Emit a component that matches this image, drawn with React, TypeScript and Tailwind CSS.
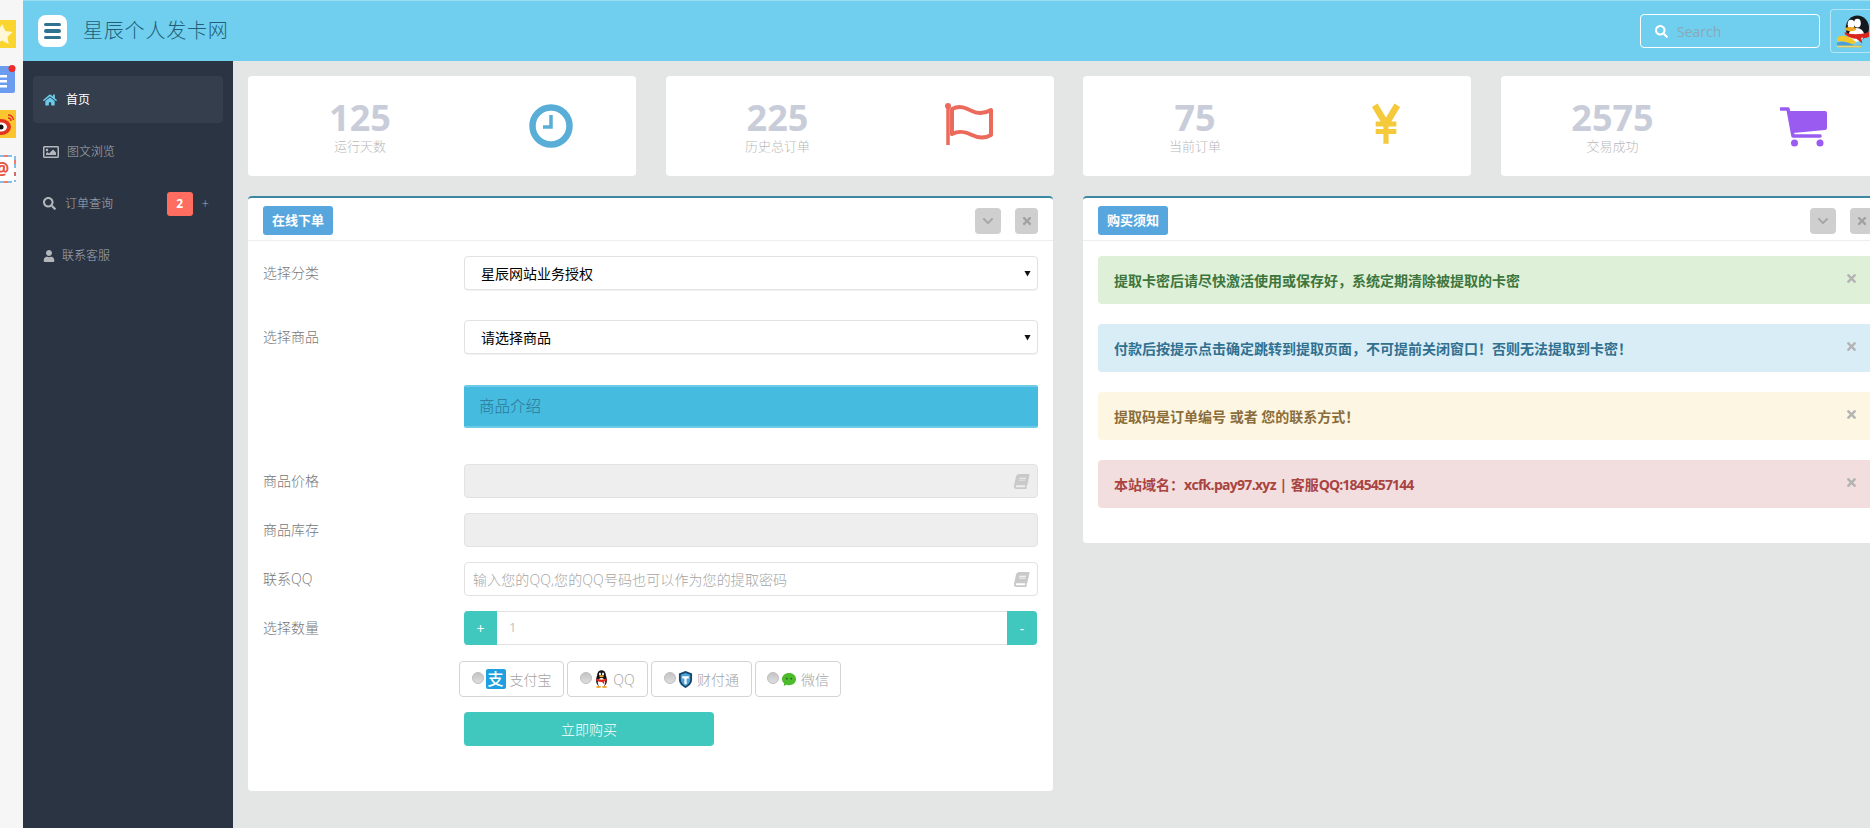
import React from 'react';
import { FaHome, FaRegImage, FaSearch, FaUser, FaBook, FaChevronDown, FaTimes } from 'react-icons/fa';

function Penguin({ className }: { className?: string }) {
  return (
    <svg viewBox="0 0 30 36" className={className}>
      <ellipse cx="15" cy="20" rx="11" ry="14" fill="#111" />
      <ellipse cx="15" cy="9" rx="8.5" ry="8.5" fill="#111" />
      <ellipse cx="15" cy="25" rx="7.5" ry="9" fill="#fff" />
      <ellipse cx="12" cy="8" rx="2" ry="3" fill="#fff" />
      <ellipse cx="18" cy="8" rx="2" ry="3" fill="#fff" />
      <ellipse cx="15" cy="12.5" rx="4.5" ry="2" fill="#f5a623" />
      <path d="M5 17c6 3 14 3 20 0l1 4c-2 1-4 1.500-6 2l1 6-5-5c-4 0-8-1-12-3z" fill="#e0251b" />
      <ellipse cx="9" cy="34" rx="5" ry="2" fill="#f5a623" />
      <ellipse cx="21" cy="34" rx="5" ry="2" fill="#f5a623" />
    </svg>
  );
}

function Avatar() {
  return (
    <svg viewBox="0 0 34 34" className="w-[34px] h-[34px]">
      <ellipse cx="21" cy="14" rx="12" ry="13" fill="#14181f" />
      <ellipse cx="20" cy="21" rx="8" ry="7" fill="#fff" />
      <ellipse cx="14.500" cy="10" rx="3.500" ry="4.500" fill="#fff" />
      <ellipse cx="21" cy="9" rx="3.500" ry="4.500" fill="#fff" />
      <ellipse cx="14" cy="15" rx="6" ry="2.200" fill="#f2a81d" />
      <path d="M8 18c6 3 16 3 25 0v5c-3 2-6 1-8 1l1 6-6-5c-4 0-9-2-12-5z" fill="#d8261c" />
      <path d="M0 24c6-4 14-2 20 5l-6 2C9 28 4 27 0 28z" fill="#f3c62c" />
      <path d="M0 29c7-2 12 0 18 3l7-1v3H0z" fill="#4a9fd8" />
      <path d="M0 32h25v2H0z" fill="#f0d766" />
    </svg>
  );
}

function StatCard({ value, label, icon }: { value: string; label: string; icon: React.ReactNode }) {
  return (
    <div className="w-[388px] h-[100px] shrink-0 bg-white rounded flex items-center">
      <div className="w-[224px] flex flex-col items-center pt-[1px]">
        <div className="text-[36px] leading-[36px] font-bold text-[#c9cdd9]">{value}</div>
        <div className="text-[13px] leading-[16px] font-light text-[#b9b9b9] mt-[2px]">{label}</div>
      </div>
      <div className="w-[158px] flex justify-center">{icon}</div>
    </div>
  );
}

function Panel({ title, children }: { title: string; children: React.ReactNode }) {
  return (
    <div className="w-[805px] shrink-0 bg-white rounded border-t-2 border-[#3d87a3]">
      <div className="h-[43px] border-b border-[#eeeeee] pl-[15px] pr-[15px] flex items-start">
        <div className="mt-[8px] w-[70px] h-[29px] rounded-[3px] bg-[#57a7de] text-white text-[13px] font-bold flex items-center justify-center">
          {title}
        </div>
        <div className="ml-auto mt-[10px] flex gap-[14px]">
          <div className="w-[26px] h-[26px] rounded bg-[#cfcfcf] flex items-center justify-center text-[#a6a6a6]">
            <FaChevronDown className="text-[12px]" />
          </div>
          <div className="w-[23px] h-[26px] rounded bg-[#cfcfcf] flex items-center justify-center text-[#a0a0a0]">
            <FaTimes className="text-[12px]" />
          </div>
        </div>
      </div>
      {children}
    </div>
  );
}

function Row({ label, children, className }: { label?: string; children: React.ReactNode; className?: string }) {
  return (
    <div className={`flex ${className ?? ''}`}>
      <div className="w-[201px] shrink-0 text-[14px] font-light text-[#777777] h-[34px] pb-[2px] flex items-center">{label}</div>
      <div className="w-[574px]">{children}</div>
    </div>
  );
}

function FakeSelect({ text }: { text: string }) {
  return (
    <div className="h-[34px] rounded border border-[#e2e2e2] shadow-[0_1px_1px_rgba(0,0,0,0.05)] bg-white flex items-center pl-[16px] pr-[6px] text-[14px] text-black">
      <span>{text}</span>
      <svg viewBox="0 0 8 8" className="ml-auto w-[7px] h-[7px]"><path d="M0.500 1h7L4 7.500z" fill="#111" /></svg>
    </div>
  );
}

function BookIcon() {
  return <FaBook className="ml-auto text-[15px] text-[#c9c9c9] -skew-x-12" />;
}

function PayOption({ width, icon, label, nudge }: { width: string; icon: React.ReactNode; label: string; nudge?: string }) {
  return (
    <div className={`${width} h-[36px] rounded border border-[#d4d4d4] flex items-center justify-center text-[14px] font-light text-[#a3a3a3] gap-[2px] ${nudge ?? ''}`}>
      <span className="w-[12px] h-[12px] rounded-full bg-gradient-to-b from-[#c4c4c4] to-[#dedede] border border-[#bdbdbd] mb-[3px] shrink-0" />
      {icon}
      <span className="ml-[2px]">{label}</span>
    </div>
  );
}

function Alert({ bg, color, children }: { bg: string; color: string; children: React.ReactNode }) {
  return (
    <div className={`h-[48px] rounded mb-[20px] ${bg} ${color} pl-[16px] pr-[15px] flex items-center text-[14px] font-bold`}>
      <span>{children}</span>
      <FaTimes className="ml-auto mb-[3px] text-[13px] text-[#b3b3b3]" />
    </div>
  );
}

function NavItem({ icon, label, active, extra, gap }: { icon: React.ReactNode; label: string; active?: boolean; extra?: React.ReactNode; gap: string }) {
  return (
    <div className={`h-[47px] rounded flex items-center pl-[10px] pr-[14px] text-[12px] mb-[5px] ${gap} ${active ? 'bg-[#343e4d] text-white' : 'text-[#a9aeb5] font-light'}`}>
      {icon}
      <span>{label}</span>
      {extra}
    </div>
  );
}

export default function App() {
  return (
    <div className="w-[1870px] h-[828px] overflow-hidden flex bg-[#e4e6e6] font-['Open_Sans','Noto_Sans_CJK_SC',sans-serif]">
      <div className="w-[23px] shrink-0 bg-[#f6f6f6] flex flex-col pt-[20px] gap-[17px]">
        <svg viewBox="0 0 16 28" className="w-[16px] h-[28px]">
          <rect width="16" height="28" fill="#fbd52f" />
          <path d="M2 4l3.500 7 7 1-5 5 1.200 7-6.700-3.500L-5 24l1.200-7-5-5 7-1z" fill="#fff7d6" />
        </svg>
        <svg viewBox="0 0 16 28" className="w-[16px] h-[28px]">
          <rect x="-6" y="1" width="21" height="27" rx="2" fill="#6b9cf0" />
          <path d="M0 10h7v2.500H0zM0 15h7v2.500H0zM0 20h7v2.500H0z" fill="#fff" />
          <circle cx="12" cy="3.500" r="3.500" fill="#ee2a2a" />
        </svg>
        <svg viewBox="0 0 16 28" className="w-[16px] h-[28px]">
          <rect width="16" height="28" fill="#fbc52f" />
          <ellipse cx="1" cy="17" rx="10" ry="8" fill="#e2341f" />
          <ellipse cx="1" cy="17" rx="6" ry="4.500" fill="#fff" />
          <circle cx="1" cy="17" r="2.500" fill="#111" />
          <path d="M8 5c3 0 5 2 5.500 5M8 8c1.500 0 3 1 3 3" stroke="#e2341f" strokeWidth="1.500" fill="none" />
        </svg>
        <svg viewBox="0 0 16 28" className="w-[16px] h-[28px]">
          <rect width="16" height="28" fill="#fff" />
          <path d="M0 1h16M15 1v26M0 27h16" stroke="#5aa7e0" strokeWidth="1.500" strokeDasharray="4 4" fill="none" />
          <path d="M4 1h4M15 5v4M15 17v4M4 27h4" stroke="#e5553f" strokeWidth="1.500" fill="none" />
          <text x="-6" y="20" fontSize="17" fontWeight="700" fill="#e5553f" fontFamily="Open Sans">@</text>
        </svg>
      </div>
      <div className="flex-1 min-w-0 flex flex-col">
        <header className="h-[61px] shrink-0 bg-[#70cfee] border-t border-[#9fdef0] flex items-center">
          <div className="ml-[15px] w-[29px] h-[32px] rounded-[8px] bg-white flex flex-col items-center justify-center gap-[3px]">
            <span className="w-[17px] h-[3.500px] rounded-sm bg-[#2f7391]" />
            <span className="w-[17px] h-[3.500px] rounded-sm bg-[#2f7391]" />
            <span className="w-[17px] h-[3.500px] rounded-sm bg-[#2f7391]" />
          </div>
          <div className="ml-[16px] text-[20px] font-light tracking-[0.8px] text-[#215f78]">星辰个人发卡网</div>
          <div className="ml-auto w-[180px] h-[34px] rounded border border-white flex items-center pl-[14px] text-[14px] text-[#8aa9b7] mr-[10px]">
            <FaSearch className="text-[13px] text-white mr-[9px]" />
            <span>Search</span>
          </div>
          <div className="w-[40px] h-[44px] rounded-l border-l border-y border-[#b6e6f5] flex items-center pl-[6px] mt-[-1px]">
            <Avatar />
          </div>
        </header>
        <div className="flex-1 flex min-h-0">
          <aside className="w-[210px] shrink-0 bg-[#2b3443] pt-[15px] px-[10px]">
            <NavItem gap="gap-[9px]" active icon={<FaHome className="text-[14px] text-[#6bcbeb]" />} label="首页" />
            <NavItem gap="gap-[8px]" icon={<FaRegImage className="text-[16px] text-[#b3b6bb]" />} label="图文浏览" />
            <NavItem
              gap="gap-[9px]"
              icon={<FaSearch className="text-[13px] text-[#b3b6bb]" />}
              label="订单查询"
              extra={
                <>
                  <span className="ml-auto w-[26px] h-[24px] rounded-[3px] bg-[#ff6c60] text-white text-[12px] font-bold flex items-center justify-center">2</span>
                  <span className="text-[13px] text-[#a9aeb5]">+</span>
                </>
              }
            />
            <NavItem gap="gap-[7px]" icon={<FaUser className="text-[12px] text-[#b3b6bb]" />} label="联系客服" />
          </aside>
          <main className="flex-1 min-w-0 overflow-hidden pt-[15px] pl-[15px]">
            <div className="flex gap-[29.5px]">
              <StatCard
                value="125"
                label="运行天数"
                icon={
                  <svg viewBox="0 0 44 44" className="w-[44px] h-[44px]">
                    <circle cx="22" cy="22" r="18.500" fill="none" stroke="#59aed8" strokeWidth="6.500" />
                    <path d="M22 11v12h-8" fill="none" stroke="#59aed8" strokeWidth="3.500" />
                  </svg>
                }
              />
              <StatCard
                value="225"
                label="历史总订单"
                icon={
                  <svg viewBox="0 0 48 44" className="w-[48px] h-[44px] -mt-[4px]">
                    <circle cx="3" cy="4" r="3" fill="#ec6a5c" />
                    <path d="M3 4v39" stroke="#ec6a5c" strokeWidth="3.500" />
                    <path d="M7 7c8-4 14-1 20 2 6 3 12 3 19-1v25c-7 4-13 3-19 0-6-3-12-5-20-1z" fill="none" stroke="#ec6a5c" strokeWidth="4" strokeLinejoin="round" />
                  </svg>
                }
              />
              <StatCard
                value="75"
                label="当前订单"
                icon={
                  <svg viewBox="0 0 32 42" className="w-[30px] h-[42px] -mt-[4px]">
                    <path d="M4 1l12 20L28 1" fill="none" stroke="#f5c93c" strokeWidth="7" />
                    <path d="M5 21h22M5 29h22M16 18v24" fill="none" stroke="#f5c93c" strokeWidth="5.500" />
                  </svg>
                }
              />
              <StatCard
                value="2575"
                label="交易成功"
                icon={
                  <svg viewBox="0 0 48 40" className="w-[48px] h-[40px] mt-[2px]">
                    <path d="M1 2h7l5 27h27" fill="none" stroke="#9a5cf0" strokeWidth="3.500" strokeLinecap="round" strokeLinejoin="round" />
                    <path d="M9 4h36a2 2 0 0 1 2 2v15a2 2 0 0 1-2 2l-32 3z" fill="#9a5cf0" />
                    <circle cx="14.500" cy="36" r="3.500" fill="#9a5cf0" />
                    <circle cx="40" cy="36" r="3.500" fill="#9a5cf0" />
                  </svg>
                }
              />
            </div>
            <div className="flex items-start gap-[30px] mt-[20px]">
              <Panel title="在线下单">
                <div className="pl-[15px] pr-[15px] pt-[15px] pb-[45px]">
                  <Row label="选择分类"><FakeSelect text="星辰网站业务授权" /></Row>
                  <Row label="选择商品" className="mt-[30px]"><FakeSelect text="请选择商品" /></Row>
                  <Row className="mt-[31px]">
                    <div className="h-[43px] rounded-[2px] bg-[#45bbdf] border-y-2 border-[#6dcbe7] flex items-center pl-[15px] text-[15.500px] font-light text-[#2c7896]">商品介绍</div>
                  </Row>
                  <Row label="商品价格" className="mt-[36px]">
                    <div className="h-[34px] rounded border border-[#e2e2e2] bg-[#eeeeee] flex items-center pr-[8px]"><BookIcon /></div>
                  </Row>
                  <Row label="商品库存" className="mt-[15px]">
                    <div className="h-[34px] rounded border border-[#e2e2e2] bg-[#eeeeee]" />
                  </Row>
                  <Row label="联系QQ" className="mt-[15px]">
                    <div className="h-[34px] rounded border border-[#e2e2e2] bg-white flex items-center pl-[8px] pr-[8px] text-[14px] font-light text-[#a5a5a5]">
                      <span className="tracking-[0.1px]">输入您的QQ,您的QQ号码也可以作为您的提取密码</span>
                      <BookIcon />
                    </div>
                  </Row>
                  <Row label="选择数量" className="mt-[15px]">
                    <div className="h-[34px] flex rounded border-y border-[#e2e2e2] w-[573px]">
                      <div className="w-[33px] -my-px rounded-l bg-[#41c8be] text-white text-[14px] flex items-center justify-center">+</div>
                      <div className="flex-1 pl-[12px] flex items-center text-[13px] text-[#c4c4c4]">1</div>
                      <div className="w-[30px] -my-px rounded-r bg-[#41c8be] text-white text-[14px] flex items-center justify-center">-</div>
                    </div>
                  </Row>
                  <div className="flex gap-[3px] mt-[16px] ml-[196px]">
                    <PayOption
                      width="w-[105px]"
                      label="支付宝"
                      icon={<span className="w-[20px] h-[20px] rounded-[2px] bg-[#1e9fe0] text-white text-[16px] leading-[20px] text-center font-medium">支</span>}
                    />
                    <PayOption width="w-[81px]" label="QQ" icon={<Penguin className="w-[15px] h-[18px]" />} />
                    <PayOption
                      width="w-[101px]"
                      label="财付通"
                      icon={
                        <svg viewBox="0 0 16 18" className="w-[15px] h-[17px]">
                          <path d="M8 0l7 2.500V9c0 4-3 7-7 9-4-2-7-5-7-9V2.500z" fill="#16466b" />
                          <path d="M8 2l5 2v5c0 3-2 5-5 7-3-2-5-4-5-7V4z" fill="#4ba3d9" />
                          <path d="M4.500 5.500h7V8H9.200v6H6.800V8H4.500z" fill="#fff" />
                        </svg>
                      }
                    />
                    <PayOption
                      width="w-[86px]"
                      label="微信"
                      icon={
                        <svg viewBox="0 0 18 17" className="w-[16px] h-[15px]">
                          <path d="M9 1c4.500 0 8 3 8 7s-3.500 7-8 7c-1 0-2-.2-3-.5L3 16l.5-3C2 11.500 1 10 1 8c0-4 3.500-7 8-7z" fill="#4cbb2c" />
                          <circle cx="6.500" cy="7.500" r="1.100" fill="#1c6b14" />
                          <circle cx="11.500" cy="7.500" r="1.100" fill="#1c6b14" />
                        </svg>
                      }
                    />
                  </div>
                  <div className="ml-[201px] mt-[15px] w-[250px] h-[34px] rounded bg-[#41c8be] text-white text-[14px] font-light flex items-center justify-center">立即购买</div>
                </div>
              </Panel>
              <Panel title="购买须知">
                <div className="pt-[15px] pl-[15px] pr-[15px] pb-[15px]">
                  <Alert bg="bg-[#dff0d8]" color="text-[#3c763d]">提取卡密后请尽快激活使用或保存好，系统定期清除被提取的卡密</Alert>
                  <Alert bg="bg-[#d9edf7]" color="text-[#31708f]">付款后按提示点击确定跳转到提取页面，不可提前关闭窗口！否则无法提取到卡密！</Alert>
                  <Alert bg="bg-[#fcf6e3]" color="text-[#8a6d3b]">提取码是订单编号 或者 您的联系方式！</Alert>
                  <Alert bg="bg-[#f2dede]" color="text-[#a94442]">
                    本站域名：<span className="tracking-[-0.7px]">xcfk.pay97.xyz</span> | 客服<span className="tracking-[-0.9px]">QQ:1845457144</span>
                  </Alert>
                </div>
              </Panel>
            </div>
          </main>
        </div>
      </div>
    </div>
  );
}
